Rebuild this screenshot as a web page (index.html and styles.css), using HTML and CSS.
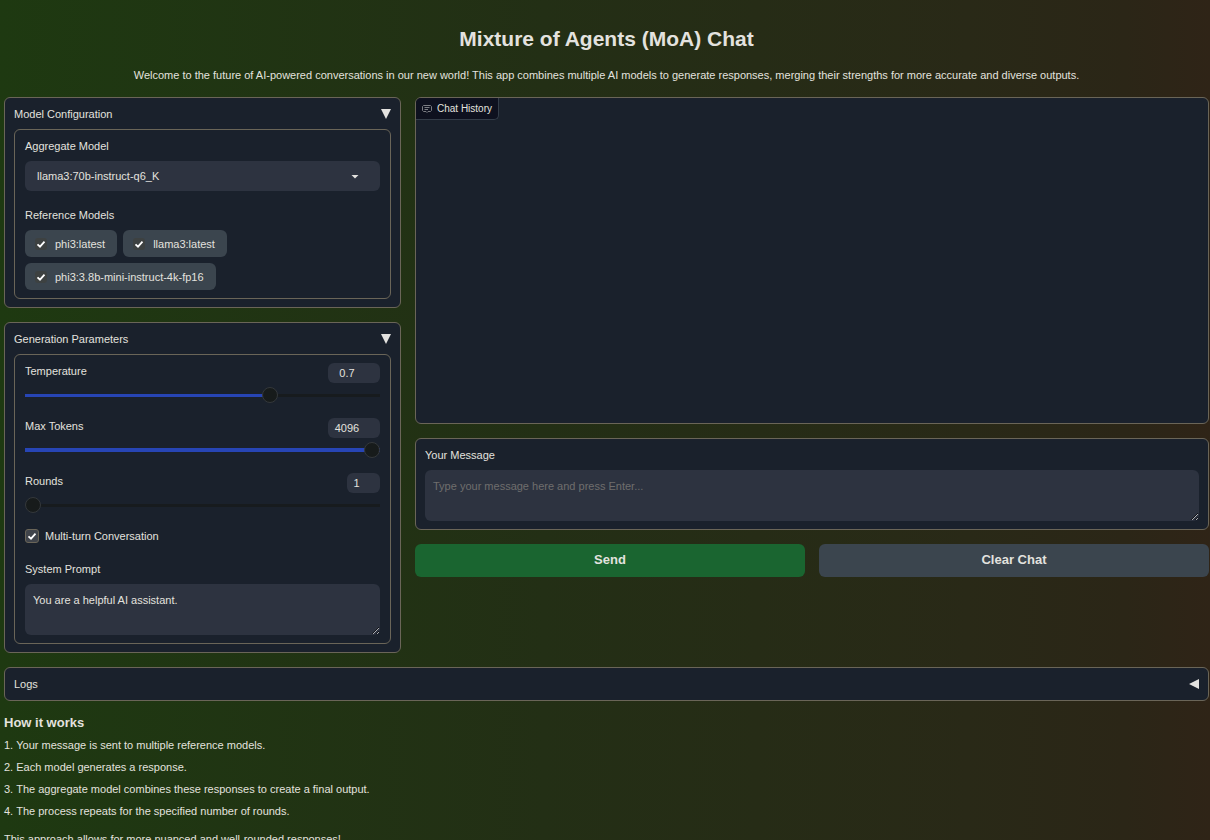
FILE: index.html
```html
<!DOCTYPE html>
<html lang="en">
<head>
<meta charset="utf-8">
<title>Mixture of Agents (MoA) Chat</title>
<link rel="stylesheet" href="styles.css">
</head>
<body>
<main class="page">
  <header class="intro">
    <h1 class="title">Mixture of Agents (MoA) Chat</h1>
    <p class="lead">Welcome to the future of AI-powered conversations in our new world! This app combines multiple AI models to generate responses, merging their strengths for more accurate and diverse outputs.</p>
  </header>

  <div class="columns">
    <div class="stack">
      <details class="panel" open>
        <summary class="panel-head">Model Configuration
          <svg class="arrow" viewBox="0 0 10 10" aria-hidden="true"><path d="M0 0H10L5 10Z"/></svg>
        </summary>
        <div class="group">
          <label class="label" for="aggregate">Aggregate Model</label>
          <div class="dropdown">
            <select class="select" id="aggregate"><option>llama3:70b-instruct-q6_K</option></select>
            <svg class="caret" viewBox="0 0 8 4" aria-hidden="true"><path d="M.5 0H7.5L4 3.5Z"/></svg>
          </div>
          <fieldset class="models">
            <legend class="label">Reference Models</legend>
            <div class="chips">
              <label class="chip"><input class="check check-plain" type="checkbox" checked>phi3:latest</label>
              <label class="chip"><input class="check check-plain" type="checkbox" checked>llama3:latest</label>
              <label class="chip"><input class="check check-plain" type="checkbox" checked>phi3:3.8b-mini-instruct-4k-fp16</label>
            </div>
          </fieldset>
        </div>
      </details>

      <details class="panel" open>
        <summary class="panel-head">Generation Parameters
          <svg class="arrow" viewBox="0 0 10 10" aria-hidden="true"><path d="M0 0H10L5 10Z"/></svg>
        </summary>
        <div class="group">
          <div class="param">
            <div class="param-head">
              <label for="temperature">Temperature</label>
              <input class="number" type="text" value="0.7" aria-label="Temperature value">
            </div>
            <input class="range" id="temperature" type="range" min="0" max="1" step="0.1" value="0.7" style="--fill: 69%">
          </div>
          <div class="param">
            <div class="param-head">
              <label for="tokens">Max Tokens</label>
              <input class="number" type="text" value="4096" aria-label="Max Tokens value">
            </div>
            <input class="range range-thick" id="tokens" type="range" min="0" max="4096" value="4096" style="--fill: 100%">
          </div>
          <div class="param">
            <div class="param-head">
              <label for="rounds">Rounds</label>
              <input class="number number-short" type="text" value="1" aria-label="Rounds value">
            </div>
            <input class="range" id="rounds" type="range" min="1" max="10" value="1" style="--fill: 0%">
          </div>
          <label class="toggle"><input class="check" type="checkbox" checked>Multi-turn Conversation</label>
          <label class="label" for="system">System Prompt</label>
          <textarea class="textarea" id="system">You are a helpful AI assistant.</textarea>
        </div>
      </details>
    </div>

    <div class="stack">
      <section class="panel history">
        <h2 class="tab">
          <svg class="chat-icon" viewBox="0 0 10 8" aria-hidden="true"><path d="M1.5 .5H8.5L9.5 1.5V5.5L8.5 6.5H6L5 7.5L4 6.5H1.5L.5 5.5V1.5ZM2.5 2.5H7.5M2.5 4.5H6"/></svg>
          Chat History
        </h2>
      </section>
      <section class="panel">
        <label class="label" for="message">Your Message</label>
        <textarea class="textarea" id="message" placeholder="Type your message here and press Enter..."></textarea>
      </section>
      <div class="actions">
        <button class="button button-primary" type="button">Send</button>
        <button class="button" type="button">Clear Chat</button>
      </div>
    </div>
  </div>

  <details class="panel">
    <summary class="panel-head panel-head-closed">Logs
      <svg class="arrow" viewBox="0 0 10 10" aria-hidden="true"><path d="M10 0V10L0 5Z"/></svg>
    </summary>
  </details>

  <section class="how">
    <h2 class="how-title">How it works</h2>
    <ol class="steps">
      <li>Your message is sent to multiple reference models.</li>
      <li>Each model generates a response.</li>
      <li>The aggregate model combines these responses to create a final output.</li>
      <li>The process repeats for the specified number of rounds.</li>
    </ol>
    <p class="closing">This approach allows for more nuanced and well-rounded responses!</p>
  </section>
</main>
</body>
</html>
```
FILE: styles.css
```css
* {
  box-sizing: border-box;
}

body {
  margin: 0;
  background: linear-gradient(90deg, #1e3911 0%, #232f15 45%, #292917 80%, #2b2617 93%, #2f2417 100%);
  color: #e3e2df;
  font: 11px/16px "Liberation Sans", Arial, sans-serif;
}

input,
select,
textarea,
button {
  font: inherit;
  color: inherit;
}

.page {
  display: flex;
  flex-direction: column;
  gap: 14px;
  padding: 25px 1px 0 4px;
}

.intro {
  text-align: center;
}

.title {
  margin: 0 0 14px;
  font-size: 21px;
  line-height: 28px;
}

.lead {
  margin: 0;
}

.columns {
  display: grid;
  grid-template-columns: minmax(0, 1fr) minmax(0, 2fr);
  gap: 14px;
}

.stack {
  display: flex;
  flex-direction: column;
  gap: 14px;
}

.panel {
  padding: 8px 9px;
  border: 1px solid #6a6558;
  border-radius: 6px;
  background: #1a212c;
}

.panel-head {
  display: flex;
  justify-content: space-between;
  align-items: center;
  margin-bottom: 7px;
  list-style: none;
}

.panel-head-closed {
  margin-bottom: 0;
}

.arrow {
  width: 10px;
  height: 10px;
  fill: #e3e2df;
}

.group {
  padding: 8px 10px;
  border: 1px solid #6a6558;
  border-radius: 6px;
}

.label {
  display: block;
  margin-bottom: 7px;
  padding: 0;
}

.dropdown {
  position: relative;
}

.select {
  display: block;
  width: 100%;
  height: 30px;
  padding: 0 12px;
  appearance: none;
  border: 0;
  border-radius: 6px;
  background: #2d3340;
}

.caret {
  position: absolute;
  top: 14px;
  right: 21px;
  width: 8px;
  height: 4px;
  fill: #e3e2df;
}

.models {
  margin: 16px 0 0;
  padding: 0;
  border: 0;
}

.chips {
  display: flex;
  flex-wrap: wrap;
  gap: 6px;
}

.chip {
  display: flex;
  align-items: center;
  gap: 8px;
  height: 27px;
  padding: 0 12px 0 10px;
  border-radius: 6px;
  background: #3b454e;
}

.check {
  width: 14px;
  height: 14px;
  margin: 0;
  appearance: none;
  border: 1px solid #6a6558;
  border-radius: 3px;
  background: #40444b url("data:image/svg+xml,%3Csvg xmlns='http://www.w3.org/2000/svg' viewBox='0 0 12 12'%3E%3Cpath d='M2.5 6.3L5 8.7L9.5 3.7' fill='none' stroke='white' stroke-width='1.8'/%3E%3C/svg%3E") center / 12px no-repeat;
}

.check-plain {
  width: 12px;
  height: 12px;
  border: 0;
  background-color: #3d4141;
}

.param {
  margin-bottom: 14px;
}

.param-head {
  display: flex;
  justify-content: space-between;
  align-items: flex-start;
  margin-bottom: 3px;
}

.number {
  width: 52px;
  height: 20px;
  padding: 0 14px 0 0;
  border: 0;
  border-radius: 6px;
  background: #2d3340;
  text-align: center;
}

.number-short {
  width: 33px;
}

.range {
  display: block;
  width: 100%;
  height: 18px;
  margin: 0;
  appearance: none;
  background: linear-gradient(90deg, #2745b5 var(--fill), #171b1e var(--fill)) center / 100% 3px no-repeat;
}

.range-thick {
  background-size: 100% 4px;
}

.range::-webkit-slider-thumb {
  width: 16px;
  height: 16px;
  appearance: none;
  border: 1px solid #34383b;
  border-radius: 50%;
  background: #171b1b;
}

.toggle {
  display: flex;
  align-items: center;
  gap: 6px;
  margin: 0 0 17px;
}

.textarea {
  display: block;
  width: 100%;
  height: 51px;
  padding: 8px;
  border: 0;
  border-radius: 6px;
  background: #2d3340;
}

.textarea::placeholder {
  color: #6f6e6d;
}

.history {
  height: 327px;
  padding: 0;
}

.tab {
  display: inline-flex;
  align-items: center;
  gap: 5px;
  height: 22px;
  margin: 0;
  padding: 0 6px;
  border: solid #343d49;
  border-width: 0 1px 1px 0;
  border-radius: 5px 0;
  background: #0e111f;
  font-size: 10px;
  font-weight: 400;
}

.chat-icon {
  width: 10px;
  height: 8px;
  fill: none;
  stroke: #7b7d83;
}

.actions {
  display: grid;
  grid-template-columns: 1fr 1fr;
  gap: 14px;
}

.button {
  height: 33px;
  padding: 0 6px 2px;
  border: 0;
  border-radius: 6px;
  background: #3b454e;
  font-size: 13px;
  font-weight: 700;
}

.button-primary {
  background: #1a6530;
}

.how-title {
  margin: 0 0 6px;
  font-size: 13px;
  line-height: 16px;
}

.steps {
  display: flex;
  flex-direction: column;
  gap: 6px;
  margin: 0;
  padding: 0;
  list-style-position: inside;
}

.closing {
  margin: 12px 0 0;
}
```
